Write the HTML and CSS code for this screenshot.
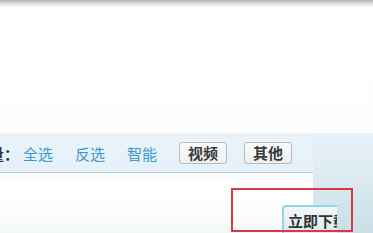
FILE: index.html
```
<!DOCTYPE html>
<html lang="zh-CN">
<head>
<meta charset="utf-8">
<title>下载</title>
<link rel="stylesheet" href="styles.css">
</head>
<body>
<div class="topshade"></div>
<div class="blank"></div>
<div class="panel">
  <div class="main">
    <div class="toolbar">
      <span class="label">量：</span>
      <a class="link">全选</a>
      <a class="link">反选</a>
      <a class="link">智能</a>
      <span class="btn">视频</span>
      <span class="btn">其他</span>
    </div>
    <div class="content"></div>
  </div>
  <div class="side"></div>
</div>
<div class="dl-clip"><span class="dl-btn">立即下载</span></div>
<div class="highlight"></div>
</body>
</html>
```

FILE: styles.css
```
html, body {
  margin: 0;
  padding: 0;
}
body {
  width: 373px;
  height: 233px;
  overflow: hidden;
  background: #ffffff;
  font-family: "Noto Sans CJK SC", "Noto Sans", sans-serif;
  position: relative;
}
.topshade {
  height: 7px;
  background: linear-gradient(to bottom, #b4b4b4 0%, #d8d8d8 45%, #fdfdfd 100%);
}
.blank {
  height: 126px;
  background: linear-gradient(to bottom, #ffffff 0%, #fefefe 85%, #fbfcfd 100%);
}
.panel {
  display: flex;
  height: 100px;
}
.main {
  width: 313px;
  display: flex;
  flex-direction: column;
}
.toolbar {
  height: 38px;
  border-bottom: 1px solid #c6cbd0;
  background: linear-gradient(to bottom, #eaf3fa 0%, #e5f0f8 100%);
  display: flex;
  align-items: center;
  padding-top: 3px;
  box-sizing: border-box;
  height: 40px;
  font-size: 15px;
  line-height: 18px;
  white-space: nowrap;
  overflow: hidden;
}
.label {
  margin-left: -11px;
  color: #333;
  font-weight: bold;
  width: 34px;
  flex: none;
}
.link {
  color: #3b98cf;
  margin-right: 22px;
  flex: none;
}
.btn {
  flex: none;
  box-sizing: border-box;
  height: 22px;
  padding: 0 8px;
  border: 1px solid #b6bcc2;
  border-radius: 3px;
  background: linear-gradient(to bottom, #fbfbfb 0%, #eceef0 100%);
  color: #3a3a3a;
  font-weight: bold;
  font-size: 15px;
  line-height: 20px;
  margin-top: -2px;
}
.btn + .btn {
  margin-left: 17px;
}
.content {
  flex: 1;
  background: linear-gradient(to bottom, #f6f9fb 0%, #ffffff 20%, #fdfdfe 70%, #f4f7f9 100%);
}
.side {
  flex: 1;
  background: linear-gradient(to bottom, #e6f0f8 0%, #dfebf3 40%, #d3e5ec 70%, #c9dfe6 100%);
}
.dl-clip {
  position: absolute;
  left: 282px;
  top: 205px;
  width: 55px;
  height: 28px;
  overflow: hidden;
}
.dl-btn {
  display: block;
  width: 80px;
  height: 30px;
  box-sizing: border-box;
  border: 2px solid #93d4ea;
  border-radius: 4px 4px 0 0;
  background: linear-gradient(to bottom, #f3f7f9 0%, #dfe8ec 100%);
  color: #333;
  font-weight: bold;
  font-size: 15px;
  line-height: 18px;
  padding: 5px 0 0 4px;
  white-space: nowrap;
}
.highlight {
  position: absolute;
  left: 231px;
  top: 188px;
  width: 122px;
  height: 44px;
  box-sizing: border-box;
  border: 2px solid #d8393f;
}
```
